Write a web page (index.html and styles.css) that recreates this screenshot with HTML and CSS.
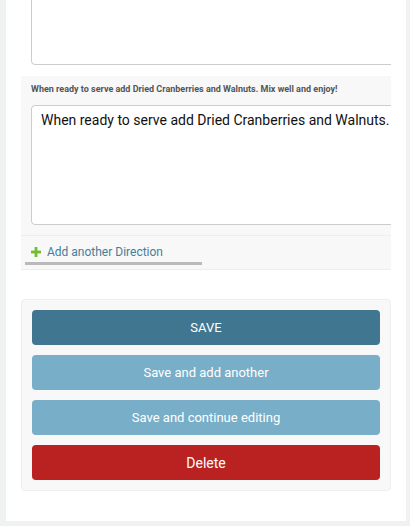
FILE: index.html
```html
<!DOCTYPE html>
<html>
<head>
<meta charset="utf-8">
<link rel="stylesheet" href="styles.css">
</head>
<body>
<div class="page">
  <div class="inline-group">
    <div class="row row-first">
      <textarea class="field field-top">Place in a large bowl and toss together with the dressing.
Cover and chill overnight, stirring occasionally.
Season with salt and pepper to taste before serving.</textarea>
    </div>
    <div class="row row-alt">
      <h3 class="row-title">When ready to serve add Dried Cranberries and Walnuts. Mix well and enjoy!</h3>
      <textarea class="field">When ready to serve add Dried Cranberries and Walnuts. Mix well and enjoy!</textarea>
    </div>
    <div class="add-row">
      <a class="add-link" href="#"><svg class="plus" viewBox="0 0 10 10" width="10" height="10"><rect x="3.6" y="0" width="2.8" height="10" fill="#70bf2b"/><rect x="0" y="3.6" width="10" height="2.8" fill="#70bf2b"/></svg>Add another Direction</a>
      <div class="scroll-thumb"></div>
    </div>
  </div>
  <div class="submit-row">
    <button class="btn btn-default">SAVE</button>
    <button class="btn btn-light">Save and add another</button>
    <button class="btn btn-light">Save and continue editing</button>
    <button class="btn btn-delete">Delete</button>
  </div>
</div>
</body>
</html>
```
FILE: styles.css
```css
html, body {
  margin: 0;
  padding: 0;
  background: #f0f2f2;
  font-family: Roboto, "Liberation Sans", sans-serif;
  height: 526px;
  overflow: hidden;
}
.page {
  margin: -60px 4px 0 6px;
  background: #fff;
  padding: 0 15px 30px 15px;
}
.inline-group {
  width: 370px;
  overflow: hidden;
}
.row {
  padding: 0 0 10px 10px;
}
.row-first {
  background: #fff;
  border-bottom: 1px solid #fff;
}
.row-alt {
  background: #f8f8f8;
  border-bottom: 1px solid #eee;
}
.row-title {
  margin: 0;
  padding: 6px 0 8px 0;
  font-size: 9px;
  font-weight: bold;
  color: #555;
  line-height: 15px;
  white-space: nowrap;
}
.field {
  display: block;
  box-sizing: border-box;
  width: 520px;
  height: 120px;
  margin: 0;
  border: 1px solid #ccc;
  border-radius: 4px;
  padding: 5px 9px;
  font-family: Roboto, "Liberation Sans", sans-serif;
  font-size: 14px;
  line-height: 18px;
  color: #111;
  background: #fff;
  resize: none;
  overflow: hidden;
}
.field-top {
  height: 125px;
  white-space: pre;
}
.add-row {
  background: #f8f8f8;
  border-bottom: 1px solid #eee;
  padding: 8px 0 4px 4px;
}
.add-link {
  display: flex;
  align-items: center;
  gap: 6px;
  padding-left: 6px;
  font-size: 12px;
  line-height: 16px;
  color: #447e9b;
  text-decoration: none;
}
.plus {
  flex: none;
}
.scroll-thumb {
  margin-top: 2px;
  width: 177px;
  height: 3px;
  background: #bababa;
}
.submit-row {
  margin-top: 29px;
  width: 370px;
  box-sizing: border-box;
  border: 1px solid #eee;
  border-radius: 4px;
  background: #f8f8f8;
  padding: 10px;
  display: flex;
  flex-direction: column;
  gap: 10px;
}
.btn {
  display: block;
  width: 348px;
  height: 35px;
  margin: 0;
  border: none;
  border-radius: 4px;
  color: #fff;
  font-family: Roboto, "Liberation Sans", sans-serif;
  font-size: 13px;
  padding: 0;
}
.btn-default { background: #417690; }
.btn-light { background: #79aec8; }
.btn-delete { background: #ba2121; font-size: 14px; }
```
